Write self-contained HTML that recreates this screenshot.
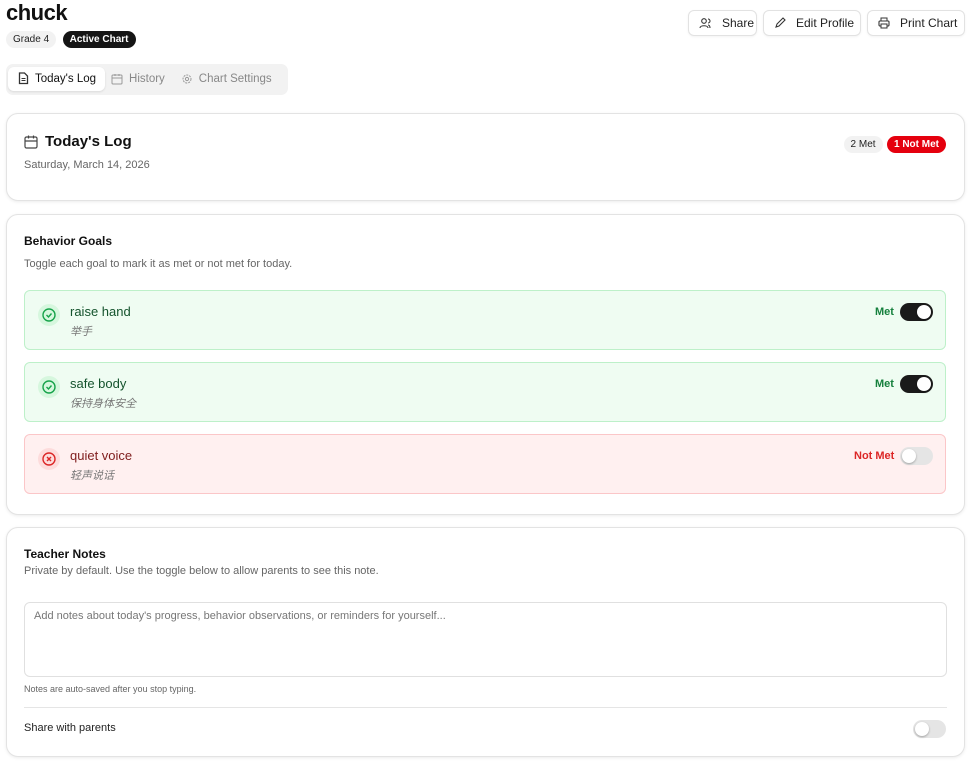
<!DOCTYPE html>
<html><head><meta charset="utf-8"><style>
*{box-sizing:border-box;margin:0;padding:0}
body{width:971px;height:764px;background:#fff;font-family:"Liberation Sans","Noto Sans CJK SC",sans-serif;color:#111;position:relative;overflow:hidden}
.abs{position:absolute}
svg{flex-shrink:0}
.card{position:absolute;left:6px;width:959px;border:1px solid #e3e3e3;border-radius:12px;box-shadow:0 1px 3px rgba(0,0,0,.08);background:#fff}
.btn{position:absolute;top:10px;height:26px;border:1px solid #e2e2e2;border-radius:6px;font-size:12px;display:flex;align-items:center;gap:10px;padding:0 10px;color:#222;box-shadow:0 1px 2px rgba(0,0,0,.05);white-space:nowrap}
.pill{display:inline-block;font-size:10px;border-radius:10px;padding:0 7px;height:17px;line-height:17px}
.goal{position:absolute;left:24px;width:922px;height:60px;border-radius:6px}
.g{background:#effcf2;border:1px solid #bdf0c9}
.r{background:#fff0f0;border:1px solid #fbc6c8}
.ic{position:absolute;left:13px;top:13px;width:22px;height:22px;border-radius:50%}
.t1{position:absolute;left:45px;top:13px;font-size:13px}
.t2{position:absolute;left:45px;top:32px;font-size:11px;font-style:italic;color:#777}
.lab{position:absolute;top:15px;font-size:11px;font-weight:bold}
.tg{position:absolute;right:12px;top:12px;width:33px;height:18px;border-radius:9px}
.tg i{position:absolute;top:2px;width:14px;height:14px;border-radius:50%;background:#fff;box-shadow:0 1px 2px rgba(0,0,0,.3)}
</style></head><body>
<div class="abs" style="left:6px;top:0;font-size:22px;font-weight:bold;letter-spacing:-0.5px">chuck</div>
<div class="abs" style="left:6px;top:29px"><span class="pill" style="background:#f2f2f2;color:#222">Grade 4</span> <span class="pill" style="background:#151515;color:#fff;font-weight:bold;margin-left:2px">Active Chart</span></div>
<div class="abs" style="left:6px;top:64px;width:282px;height:31px;background:#f2f2f2;border-radius:7px"></div>
<div class="abs" style="left:8px;top:67px;width:97px;height:24px;background:#fff;border-radius:6px;box-shadow:0 1px 2px rgba(0,0,0,.1)"></div>
<div class="abs" style="left:18px;top:72px;font-size:11.5px;display:flex;align-items:center;gap:6px;white-space:nowrap">
<svg width="11" height="13" viewBox="0 0 11 13"><path d="M1.5 1h5l3 3v7.5h-8z" fill="none" stroke="#333" stroke-width="1.3"/><path d="M3.5 6.5h4M3.5 8.5h4" stroke="#333"/></svg><span style="color:#111">Today's Log</span>
<svg style="margin-left:9px" width="12" height="12" viewBox="0 0 12 12"><rect x="1" y="2" width="10" height="9" rx="1" fill="none" stroke="#999"/><path d="M1 5h10M4 1v2M8 1v2" stroke="#999"/></svg><span style="color:#888">History</span>
<svg style="margin-left:10px" width="12" height="12" viewBox="0 0 12 12"><circle cx="6" cy="6" r="4" fill="none" stroke="#999" stroke-dasharray="2 1"/><circle cx="6" cy="6" r="1.6" fill="none" stroke="#999"/></svg><span style="color:#888">Chart Settings</span></div>

<div class="btn" style="left:688px;width:69px"><svg width="13" height="12" viewBox="0 0 13 12"><circle cx="5" cy="4" r="2.3" fill="none" stroke="#333" stroke-width="1.1"/><path d="M1 11c0-3 8-3 8 0M9 2a2 2 0 010 4M11 11c0-2-1-3-2-3" fill="none" stroke="#333" stroke-width="1.1"/></svg>Share</div>
<div class="btn" style="left:763px;width:98px"><svg width="12" height="12" viewBox="0 0 12 12"><path d="M2 10l1-3 6-6 2 2-6 6z" fill="none" stroke="#333" stroke-width="1.1"/></svg>Edit Profile</div>
<div class="btn" style="left:867px;width:98px"><svg width="12" height="12" viewBox="0 0 12 12"><rect x="1" y="4" width="10" height="5" rx="1" fill="none" stroke="#333" stroke-width="1.1"/><rect x="3" y="1" width="6" height="3" fill="none" stroke="#333"/><rect x="3" y="7" width="6" height="4" fill="#fff" stroke="#333"/></svg>Print Chart</div>

<div class="card" style="top:113px;height:88px">
<svg class="abs" style="left:17px;top:21px" width="14" height="14" viewBox="0 0 14 14"><rect x="1" y="2" width="12" height="11" rx="1.5" fill="none" stroke="#444" stroke-width="1.2"/><path d="M1 6h12M4.5 0.5v3M9.5 0.5v3" stroke="#444" stroke-width="1.2"/></svg>
<div class="abs" style="left:38px;top:19px;font-size:15px;font-weight:bold">Today's Log</div>
<div class="abs" style="left:17px;top:45px;font-size:11px;color:#666">Saturday, March 14, 2026</div>
<div class="abs" style="right:18px;top:20px"><span class="pill" style="background:#f2f2f2;color:#222">2 Met</span> <span class="pill" style="background:#e5000e;color:#fff;font-weight:bold">1 Not Met</span></div>
</div>

<div class="card" style="top:214px;height:301px">
<div class="abs" style="left:17px;top:19px;font-size:12px;font-weight:bold">Behavior Goals</div>
<div class="abs" style="left:17px;top:43px;font-size:11px;color:#666">Toggle each goal to mark it as met or not met for today.</div>
</div>
<div class="goal g" style="top:290px"><div class="ic" style="background:#d6f7de"><svg width="22" height="22" viewBox="0 0 22 22"><circle cx="11" cy="11" r="6" fill="none" stroke="#16a34a" stroke-width="1.4"/><path d="M8.5 11l2 2 3-3.5" fill="none" stroke="#16a34a" stroke-width="1.4"/></svg></div><div class="t1" style="color:#14532d">raise hand</div><div class="t2">举手</div><div class="lab" style="left:850px;color:#15803d">Met</div><div class="tg" style="background:#1a1a1a"><i style="left:17px"></i></div></div>
<div class="goal g" style="top:362px"><div class="ic" style="background:#d6f7de"><svg width="22" height="22" viewBox="0 0 22 22"><circle cx="11" cy="11" r="6" fill="none" stroke="#16a34a" stroke-width="1.4"/><path d="M8.5 11l2 2 3-3.5" fill="none" stroke="#16a34a" stroke-width="1.4"/></svg></div><div class="t1" style="color:#14532d">safe body</div><div class="t2">保持身体安全</div><div class="lab" style="left:850px;color:#15803d">Met</div><div class="tg" style="background:#1a1a1a"><i style="left:17px"></i></div></div>
<div class="goal r" style="top:434px"><div class="ic" style="background:#fddcdc"><svg width="22" height="22" viewBox="0 0 22 22"><circle cx="11" cy="11" r="6" fill="none" stroke="#dc2626" stroke-width="1.4"/><path d="M9 9l4 4M13 9l-4 4" stroke="#dc2626" stroke-width="1.4"/></svg></div><div class="t1" style="color:#7f1d1d">quiet voice</div><div class="t2">轻声说话</div><div class="lab" style="left:829px;color:#dc2626">Not Met</div><div class="tg" style="background:#e5e5e5"><i style="left:2px"></i></div></div>

<div class="card" style="top:527px;height:230px">
<div class="abs" style="left:17px;top:19px;font-size:12px;font-weight:bold">Teacher Notes</div>
<div class="abs" style="left:17px;top:37px;font-size:11px;color:#666">Private by default. Use the toggle below to allow parents to see this note.</div>
<div class="abs" style="left:17px;top:74px;width:923px;height:75px;border:1px solid #e0e0e0;border-radius:6px;padding:7px 9px;font-size:11px;color:#777">Add notes about today's progress, behavior observations, or reminders for yourself...</div>
<div class="abs" style="left:17px;top:156px;font-size:9px;color:#666">Notes are auto-saved after you stop typing.</div>
<div class="abs" style="left:17px;top:179px;width:923px;border-top:1px solid #e5e5e5"></div>
<div class="abs" style="left:17px;top:194px;font-size:11px;color:#222">Share with parents</div>
<div class="abs" style="left:906px;top:192px;width:33px;height:18px;border-radius:9px;background:#e5e5e5"><i style="position:absolute;left:2px;top:2px;width:14px;height:14px;border-radius:50%;background:#fff;box-shadow:0 1px 2px rgba(0,0,0,.3)"></i></div>
</div>
</body></html>
